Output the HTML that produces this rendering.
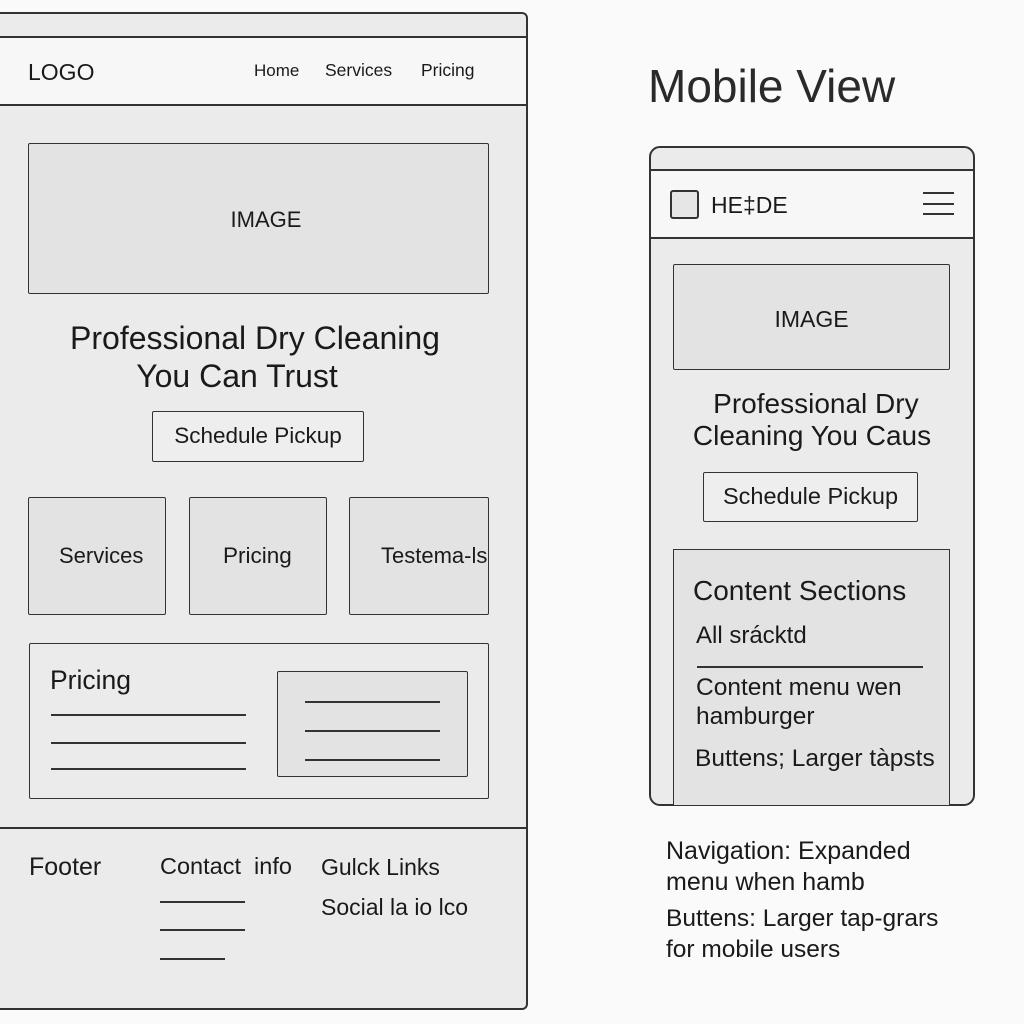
<!DOCTYPE html>
<html><head><meta charset="utf-8"><style>
*{margin:0;padding:0;box-sizing:border-box}
body{width:1024px;height:1024px;background:#fafafa;position:relative;overflow:hidden;font-family:"Liberation Sans",sans-serif;color:#1a1a1a}
.a{position:absolute}
.t{position:absolute;white-space:nowrap;line-height:1}
.box{position:absolute;border:1.5px solid #333;border-radius:2px;background:#e3e3e3}
.ln{position:absolute;height:1.5px;background:#333}
.c{text-align:center}
</style></head><body>
<!-- Desktop panel -->
<div class="a" style="left:-10px;top:12px;width:538px;height:998px;background:#ebebeb;border:2px solid #333;border-radius:6px"></div>
<div class="a" style="left:0;top:36px;width:526px;height:70px;background:#f7f7f7;border-top:2px solid #333;border-bottom:2px solid #333"></div>
<div class="t" style="left:28px;top:61px;font-size:23px">LOGO</div>
<div class="t" style="left:254px;top:62px;font-size:17px">Home</div>
<div class="t" style="left:325px;top:62px;font-size:17.5px">Services</div>
<div class="t" style="left:421px;top:62px;font-size:17.5px">Pricing</div>
<div class="box" style="left:28px;top:143px;width:461px;height:151px"></div>
<div class="t c" style="left:28px;width:476px;top:209px;font-size:22px">IMAGE</div>
<div class="t c" style="left:0;width:510px;top:319px;font-size:32px;line-height:38px">Professional Dry Cleaning<br><span style="margin-right:36px">You Can Trust</span></div>
<div class="box" style="left:152px;top:411px;width:212px;height:51px;background:#eeeeee"></div>
<div class="t c" style="left:152px;width:212px;top:425px;font-size:22.5px">Schedule Pickup</div>
<div class="box" style="left:28px;top:497px;width:138px;height:118px"></div>
<div class="t" style="left:59px;top:545px;font-size:22px">Services</div>
<div class="box" style="left:189px;top:497px;width:138px;height:118px"></div>
<div class="t" style="left:223px;top:545px;font-size:22.5px">Pricing</div>
<div class="box" style="left:349px;top:497px;width:140px;height:118px"></div>
<div class="t" style="left:381px;top:545px;font-size:22px;width:107px;overflow:hidden">Testema-ls</div>
<div class="box" style="left:29px;top:643px;width:460px;height:156px;background:#ebebeb"></div>
<div class="t" style="left:50px;top:667px;font-size:26.5px">Pricing</div>
<div class="ln" style="left:51px;top:714px;width:195px"></div>
<div class="ln" style="left:51px;top:742px;width:195px"></div>
<div class="ln" style="left:51px;top:768px;width:195px"></div>
<div class="box" style="left:277px;top:671px;width:191px;height:106px"></div>
<div class="ln" style="left:305px;top:701px;width:135px"></div>
<div class="ln" style="left:305px;top:730px;width:135px"></div>
<div class="ln" style="left:305px;top:759px;width:135px"></div>
<div class="ln" style="left:0;top:827px;width:527px;height:2px"></div>
<div class="t" style="left:29px;top:855px;font-size:25px">Footer</div>
<div class="t" style="left:160px;top:855px;font-size:23.5px">Contact&nbsp; info</div>
<div class="ln" style="left:160px;top:901px;width:85px"></div>
<div class="ln" style="left:160px;top:929px;width:85px"></div>
<div class="ln" style="left:160px;top:958px;width:65px"></div>
<div class="t" style="left:321px;top:856px;font-size:23px">Gulck Links</div>
<div class="t" style="left:321px;top:896px;font-size:23px">Social la io lco</div>

<!-- Mobile -->
<div class="t" style="left:648px;top:63px;font-size:46px;color:#2a2a2a">Mobile View</div>
<div class="a" style="left:649px;top:146px;width:326px;height:660px;background:#ebebeb;border:2px solid #333;border-radius:11px"></div>
<div class="a" style="left:651px;top:169px;width:322px;height:70px;background:#f7f7f7;border-top:2px solid #333;border-bottom:2px solid #333"></div>
<div class="a" style="left:670px;top:190px;width:29px;height:29px;border:2px solid #333;border-radius:3px;background:#e6e6e6"></div>
<div class="t" style="left:711px;top:194px;font-size:23px">HE‡DE</div>
<div class="ln" style="left:923px;top:192px;width:31px;height:2px"></div>
<div class="ln" style="left:923px;top:203px;width:31px;height:2px"></div>
<div class="ln" style="left:923px;top:213px;width:31px;height:2px"></div>
<div class="box" style="left:673px;top:264px;width:277px;height:106px"></div>
<div class="t c" style="left:673px;width:277px;top:308px;font-size:23px">IMAGE</div>
<div class="t c" style="left:650px;width:324px;top:388px;font-size:28px;line-height:32px">&nbsp;Professional Dry<br>Cleaning You Caus</div>
<div class="box" style="left:703px;top:472px;width:215px;height:50px;background:#eeeeee"></div>
<div class="t c" style="left:703px;width:215px;top:485px;font-size:23.5px">Schedule Pickup</div>
<div class="a" style="left:673px;top:549px;width:277px;height:256px;border:1.5px solid #333;border-bottom:none;background:#e3e3e3"></div>
<div class="t" style="left:693px;top:577px;font-size:28px">Content Sections</div>
<div class="t" style="left:696px;top:624px;font-size:24px">All srácktd</div>
<div class="ln" style="left:697px;top:666px;width:226px"></div>
<div class="t" style="left:696px;top:673px;font-size:24.5px;line-height:29px">Content menu wen<br>hamburger</div>
<div class="t" style="left:695px;top:747px;font-size:24.5px">Buttens; Larger tàpsts</div>
<div class="t" style="left:666px;top:836px;font-size:25px;line-height:31px">Navigation: Expanded<br>menu when hamb</div>
<div class="t" style="left:666px;top:903px;font-size:24.5px;line-height:31px">Buttens: Larger tap-grars<br>for mobile users</div>
</body></html>
